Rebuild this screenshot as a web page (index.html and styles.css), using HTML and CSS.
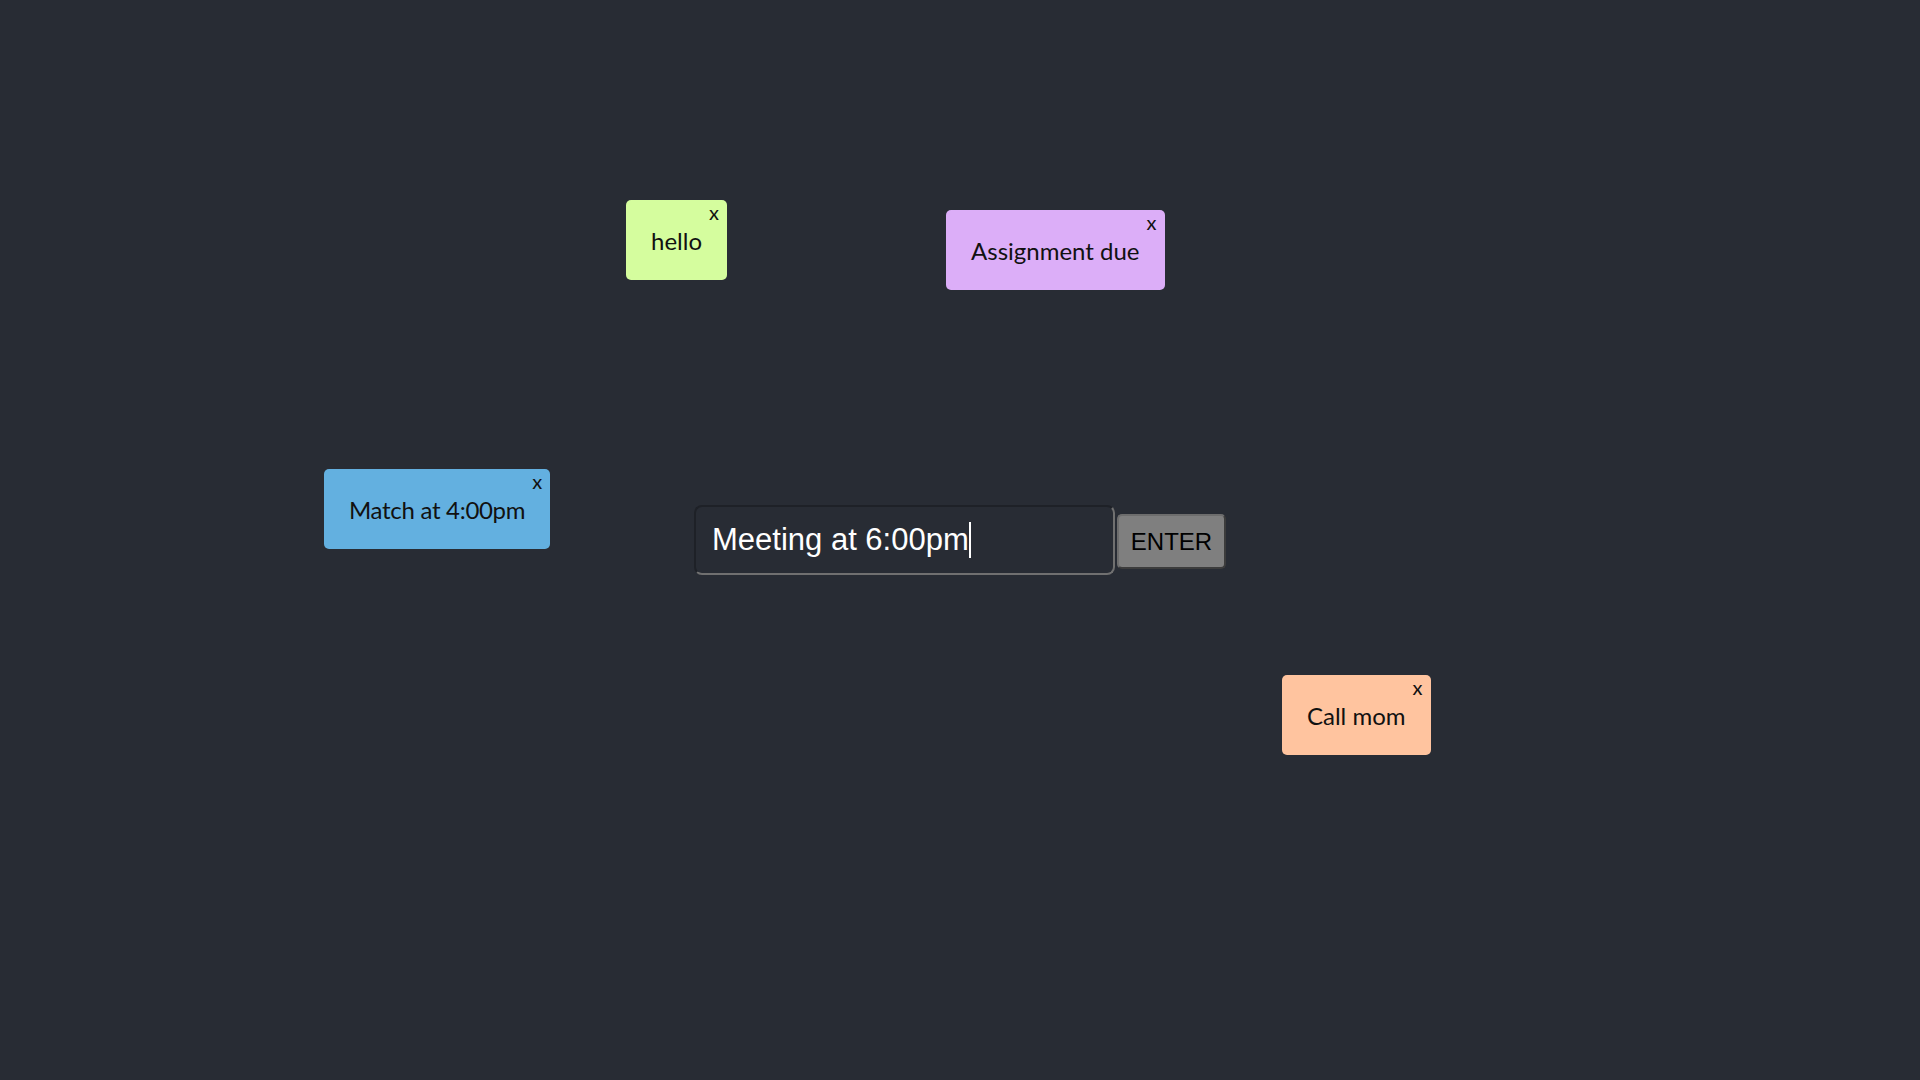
FILE: index.html
```html
<!DOCTYPE html>
<html lang="en">
<head>
<meta charset="utf-8">
<title>Sticky Notes</title>
<link rel="stylesheet" href="styles.css">
</head>
<body>
<main class="board">
  <div class="note note-green" style="left:626px;top:200px">
    <button class="note-close" type="button">x</button>
    <span class="note-text">hello</span>
  </div>
  <div class="note note-purple" style="left:946px;top:210px">
    <button class="note-close" type="button">x</button>
    <span class="note-text">Assignment due</span>
  </div>
  <div class="note note-blue" style="left:324px;top:469px">
    <button class="note-close" type="button">x</button>
    <span class="note-text note-text-tight">Match at 4:00pm</span>
  </div>
  <div class="note note-peach" style="left:1282px;top:675px">
    <button class="note-close" type="button">x</button>
    <span class="note-text">Call mom</span>
  </div>

  <form class="entry" onsubmit="return false">
    <div class="entry-field">
      <span class="entry-value">Meeting at 6:00pm</span><span class="entry-caret"></span>
    </div>
    <button class="entry-button" type="submit">ENTER</button>
  </form>
</main>
</body>
</html>
```
FILE: styles.css
```css
html, body {
  margin: 0;
  padding: 0;
  height: 100%;
}

body {
  background: #282c34;
  overflow: hidden;
}

.board {
  position: relative;
  width: 100%;
  height: 100%;
  display: flex;
  align-items: center;
  justify-content: center;
}

.note {
  position: absolute;
  box-sizing: border-box;
  height: 80px;
  padding: 0 25px;
  border-radius: 5px;
  display: flex;
  align-items: center;
  justify-content: center;
  font-family: Lato, "Open Sans", sans-serif;
  font-size: 24px;
  color: #111;
  white-space: nowrap;
}

.note-text-tight {
  letter-spacing: -0.3px;
}

.note-green { background: #d5fd9e; }
.note-purple { background: #dcaef8; }
.note-blue { background: #63b0e0; }
.note-peach { background: #ffc49f; }

.note-close {
  position: absolute;
  top: 1px;
  right: 6px;
  padding: 0 2px;
  border: none;
  background: transparent;
  font-family: Lato, "Open Sans", sans-serif;
  font-size: 20px;
  line-height: 22px;
  color: #111;
  cursor: pointer;
}

.entry {
  display: flex;
  align-items: center;
  gap: 2px;
  margin: 0;
}

.entry-field {
  box-sizing: border-box;
  width: 421px;
  height: 70px;
  padding: 0 17px 0 16px;
  display: flex;
  align-items: center;
  border: 2px solid;
  border-color: #1e2127 #707070 #707070 #1e2127;
  border-radius: 8px;
  background: #282c34;
  font-family: "Liberation Sans", Arial, sans-serif;
  font-size: 31px;
  color: #fff;
}

.entry-caret {
  display: inline-block;
  width: 2px;
  height: 36px;
  margin-left: 0;
  background: #fff;
}

.entry-button {
  box-sizing: border-box;
  width: 109px;
  height: 55px;
  margin-top: 3px;
  padding: 0;
  border: 2px solid;
  border-color: #6d6d6d #3c3c3c #3c3c3c #6d6d6d;
  border-radius: 5px;
  background: #7f7f7f;
  font-family: "Liberation Sans", Arial, sans-serif;
  font-size: 24px;
  color: #000;
}
```
